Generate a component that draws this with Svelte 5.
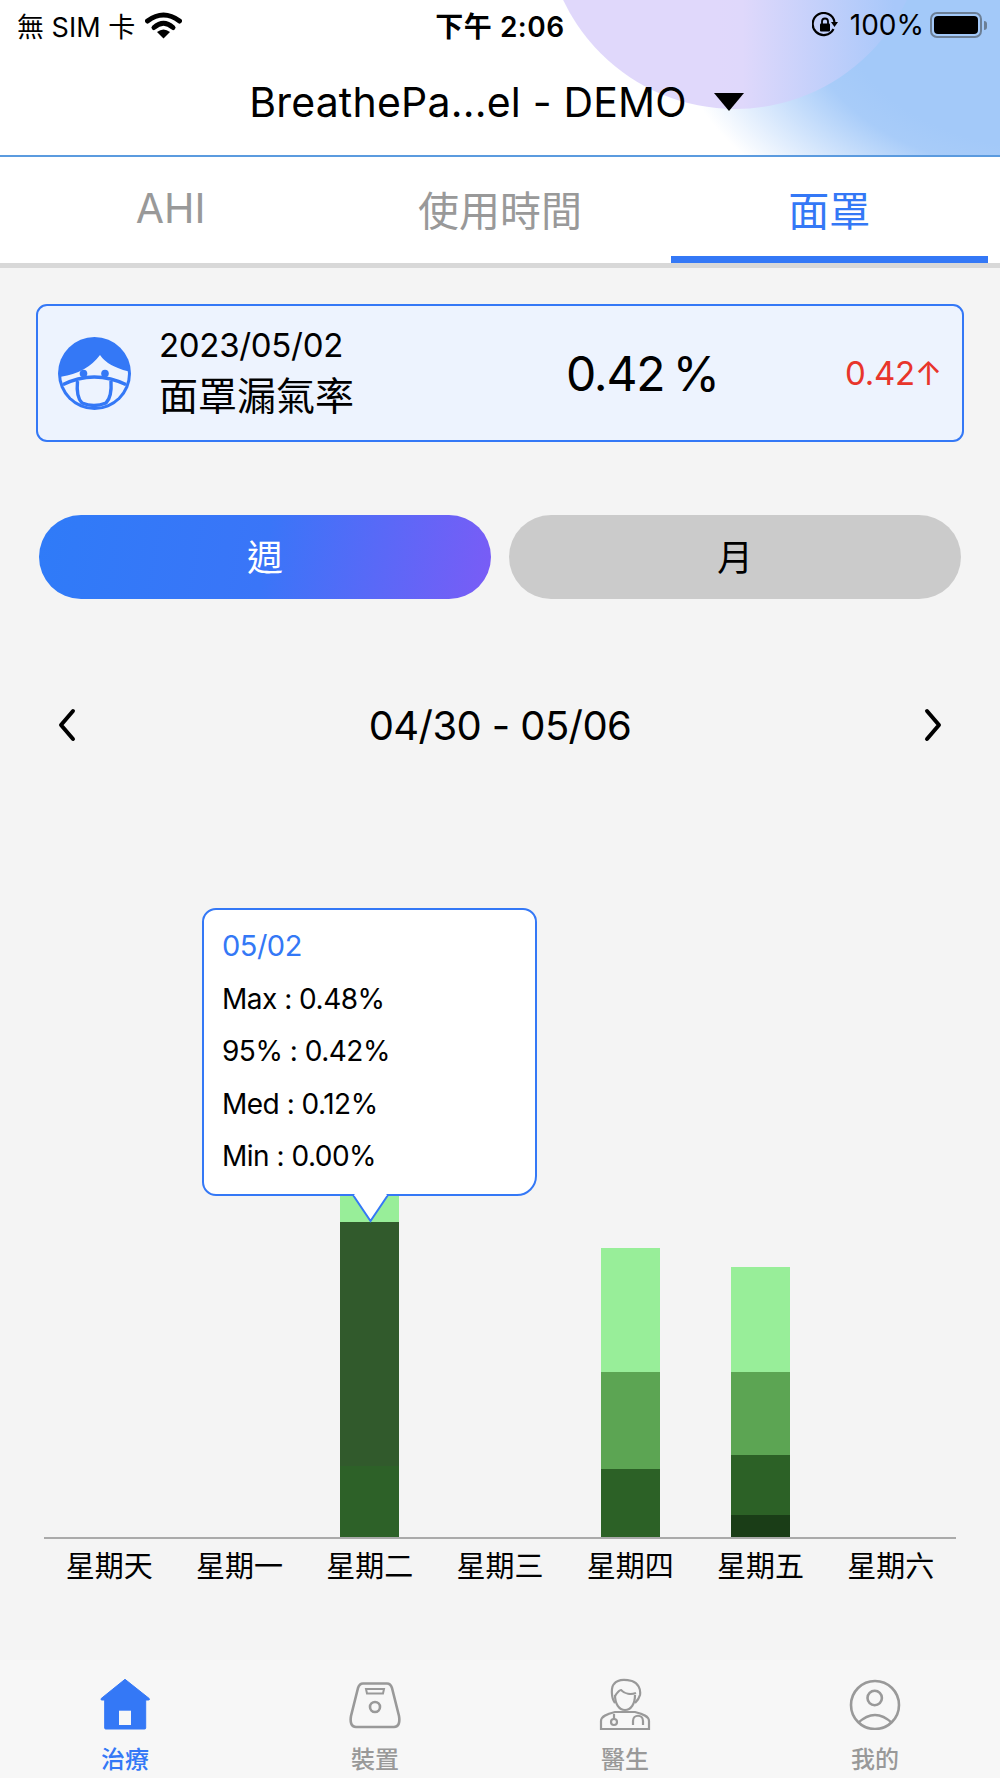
<script>
  const tabs = [
    { label: 'AHI' },
    { label: '使用時間' },
    { label: '面罩', active: true }
  ];

  // segment heights in px, listed from the top of the bar down
  const days = [
    { label: '星期天', segments: [] },
    { label: '星期一', segments: [] },
    {
      label: '星期二',
      segments: [
        { h: 30, color: '#98ee99' },
        { h: 244, color: '#315a2c' },
        { h: 71, color: '#2d6128' }
      ]
    },
    { label: '星期三', segments: [] },
    {
      label: '星期四',
      segments: [
        { h: 124, color: '#98ee99' },
        { h: 97, color: '#5ca553' },
        { h: 68, color: '#2c6126' }
      ]
    },
    {
      label: '星期五',
      segments: [
        { h: 105, color: '#98ee99' },
        { h: 83, color: '#5ca553' },
        { h: 60, color: '#2c6126' },
        { h: 22, color: '#1a3d17' }
      ]
    },
    { label: '星期六', segments: [] }
  ];

  const tooltipRows = ['Max : 0.48%', '95% : 0.42%', 'Med : 0.12%', 'Min : 0.00%'];
</script>

<div class="page">
  <header class="header">
    <span class="glow"></span>
    <span class="circle"></span>

    <div class="status">
      <div class="status-left">
        <span>無 SIM 卡</span>
        <svg class="wifi" viewBox="0 0 37 27" width="37" height="27">
          <path d="M2.5 9 Q18.5 -3 34.5 9" fill="none" stroke="#000" stroke-width="5" stroke-linecap="round" />
          <path d="M9 15.5 Q18.5 7 28 15.5" fill="none" stroke="#000" stroke-width="5" stroke-linecap="round" />
          <path d="M18.5 26.5 L12 20 Q18.5 15 25 20 Z" fill="#000" />
        </svg>
      </div>
      <div class="status-time">下午 2:06</div>
      <div class="status-right">
        <svg class="lock" viewBox="0 0 26 26" width="26" height="26">
          <path d="M21.5 17 A11 11 0 1 1 22.5 10" fill="none" stroke="#000" stroke-width="2.2" />
          <path d="M19 10 H26 L22.5 15 Z" fill="#000" />
          <rect x="8" y="11.5" width="10" height="8" rx="1" fill="#000" />
          <path d="M10 12 V9.5 A3 3 0 0 1 16 9.5 V12" fill="none" stroke="#000" stroke-width="1.8" />
        </svg>
        <span class="percent">100%</span>
        <span class="battery"><span class="battery-fill"></span></span>
        <span class="battery-nub"></span>
      </div>
    </div>

    <div class="title-row">
      <span class="title">BreathePa...el - DEMO</span>
      <svg viewBox="0 0 30 18" width="30" height="18"><path d="M0 0 H30 L15 18 Z" fill="#000" /></svg>
    </div>
  </header>

  <nav class="tabs">
    {#each tabs as tab}
      <div class="tab" class:active={tab.active}>{tab.label}</div>
    {/each}
  </nav>

  <main class="content">
    <section class="summary">
      <svg class="mask-icon" viewBox="0 0 73 73" width="73" height="73">
        <defs>
          <clipPath id="face-clip"><circle cx="36.5" cy="36.5" r="33.5" /></clipPath>
        </defs>
        <circle cx="36.5" cy="36.5" r="36.5" fill="#3478f6" />
        <path d="M0 40 Q28 37 42 18 Q50 30 73 35 V73 H0 Z" fill="#edf3fe" clip-path="url(#face-clip)" />
        <circle cx="25.5" cy="36.5" r="3.8" fill="#3478f6" />
        <circle cx="47" cy="36.5" r="3.8" fill="#3478f6" />
        <path d="M4 48 Q36 32 69 48" fill="none" stroke="#3478f6" stroke-width="3.4" clip-path="url(#face-clip)" />
        <path d="M19.5 44 Q18 60 24 66 Q36 71 48 66 Q54 60 53 44" fill="none" stroke="#3478f6" stroke-width="3.4" />
      </svg>
      <div class="summary-text">
        <div class="summary-date">2023/05/02</div>
        <div class="summary-name">面罩漏氣率</div>
      </div>
      <div class="summary-value">0.42 %</div>
      <div class="summary-delta">0.42↑</div>
    </section>

    <div class="segment">
      <div class="segment-btn on">週</div>
      <div class="segment-btn">月</div>
    </div>

    <div class="range">
      <svg viewBox="0 0 18 34" width="18" height="34"><path d="M15 3 L3 17 L15 31" fill="none" stroke="#000" stroke-width="4" stroke-linecap="round" stroke-linejoin="round" /></svg>
      <span>04/30 - 05/06</span>
      <svg viewBox="0 0 18 34" width="18" height="34"><path d="M3 3 L15 17 L3 31" fill="none" stroke="#000" stroke-width="4" stroke-linecap="round" stroke-linejoin="round" /></svg>
    </div>

    <div class="chart">
      <div class="plot">
        {#each days as day}
          <div class="col">
            {#if day.segments.length}
              <div class="bar">
                {#each day.segments as seg}
                  <div style="height: {seg.h}px; background: {seg.color}"></div>
                {/each}
              </div>
            {/if}
          </div>
        {/each}
      </div>
      <div class="labels">
        {#each days as day}
          <div>{day.label}</div>
        {/each}
      </div>

      <div class="tooltip">
        <div class="tooltip-date">05/02</div>
        {#each tooltipRows as row}
          <div>{row}</div>
        {/each}
        <svg class="tooltip-tip" viewBox="0 0 39 30" width="39" height="30">
          <path d="M2 1 L19.5 27 L37 1" fill="#fff" stroke="#3478f6" stroke-width="2" />
          <rect x="3.5" y="0" width="32" height="2" fill="#fff" />
        </svg>
      </div>
    </div>
  </main>

  <footer class="tabbar">
    <div class="tabbar-item on">
      <svg viewBox="0 0 52 52" width="52" height="52">
        <path d="M26 1.3 L50.2 20.5 Q51 22 49.5 22 H46.7 V50 Q46.7 51 45.7 51 H6.7 Q5.7 51 5.7 50 V22 H2.9 Q1.4 22 2.2 20.5 Z" fill="#3478f6" stroke="#3478f6" stroke-linejoin="round" />
        <rect x="20" y="32.7" width="12" height="14.3" fill="#f7f7f7" />
      </svg>
      <span>治療</span>
    </div>
    <div class="tabbar-item">
      <svg viewBox="0 0 52 52" width="52" height="52" fill="none" stroke="#999" stroke-width="2.6">
        <path d="M14 5.5 H38 C41 5.5 42 7 43 10 L50 38 C51 44 50 49 45 49 H7 C2 49 1 44 2 38 L9 10 C10 7 11 5.5 14 5.5 Z" />
        <path d="M17 11 H35 L34 15.5 H18 Z" stroke-width="2" />
        <circle cx="26" cy="29" r="5" />
      </svg>
      <span>裝置</span>
    </div>
    <div class="tabbar-item">
      <svg viewBox="0 0 52 52" width="52" height="52" fill="none" stroke="#999" stroke-width="2.2">
        <path d="M16 25 C12 20 12 9 15 6 C18 2 25 1 33 3 C39 5 42 11 41 17 C40 21 38 23 36 25" />
        <path d="M16 17 C16 26 20 32 26 32 C32 32 36 26 36 17" />
        <path d="M16 18 C18 15 20 12 22 12 C26 16 32 17 37 15" />
        <path d="M2 51 V43 C2 38 8 36 16 34 H36 C44 36 50 38 50 43 V51 Z" />
        <path d="M15 36 V41" />
        <circle cx="15" cy="44" r="3" />
        <path d="M34 47 V43 C34 36 44 36 44 43 V47" />
      </svg>
      <span>醫生</span>
    </div>
    <div class="tabbar-item">
      <svg viewBox="0 0 52 52" width="52" height="52" fill="none" stroke="#999" stroke-width="2.6">
        <circle cx="26" cy="27" r="24" />
        <circle cx="25.7" cy="20" r="7.2" />
        <path d="M9 45 Q26 29 43 45" />
      </svg>
      <span>我的</span>
    </div>
  </footer>
</div>

<style>
  :global(body) {
    background: #f4f4f4;
  }

  .page {
    width: 1000px;
    height: 1778px;
    overflow: hidden;
    display: flex;
    flex-direction: column;
    background: #f4f4f4;
    font-family: Inter, 'Noto Sans CJK TC', sans-serif;
    color: #000;
  }

  /* --- Header --- */
  .header {
    position: relative;
    height: 155px;
    overflow: hidden;
    background: #fff;
    border-bottom: 2px solid #5b9bdf;
    flex: none;
  }

  .glow {
    position: absolute;
    left: 700px;
    top: -160px;
    width: 520px;
    height: 400px;
    background: radial-gradient(ellipse at 70% 45%, #a3c9f9 42%, #a8ccf9 50%, #ffffff 76%);
  }

  .circle {
    position: absolute;
    left: 545px;
    top: -271px;
    width: 380px;
    height: 380px;
    border-radius: 50%;
    background: linear-gradient(90deg, #e0d8fb 45%, #dfd8fb 52%, #a8c8fa 92%);
  }

  .status {
    position: relative;
    display: grid;
    grid-template-columns: 1fr auto 1fr;
    align-items: center;
    height: 50px;
    padding: 0 13px 0 17px;
    font-size: 27px;
  }

  .status-left {
    display: flex;
    align-items: center;
    gap: 10px;
  }

  .status-time {
    margin-left: -4px;
    font-size: 28px;
    font-weight: 600;
    letter-spacing: 0.5px;
  }

  .status-right {
    display: flex;
    align-items: center;
    justify-content: flex-end;
  }

  .percent {
    margin-left: 12px;
    font-size: 28px;
  }

  .battery {
    display: block;
    box-sizing: border-box;
    width: 52px;
    height: 26px;
    margin-left: 6px;
    padding: 2px;
    border: 2px solid #6c7f96;
    border-radius: 7px;
  }

  .battery-fill {
    display: block;
    height: 100%;
    background: #000;
    border-radius: 4px;
  }

  .battery-nub {
    width: 3px;
    height: 9px;
    margin-left: 2px;
    background: #6c7f96;
    border-radius: 0 3px 3px 0;
  }

  .title-row {
    position: relative;
    display: flex;
    align-items: center;
    justify-content: center;
    gap: 27px;
    height: 56px;
    margin-top: 24px;
    padding-right: 7px;
  }

  .title {
    font-size: 41px;
    letter-spacing: 0.2px;
  }

  /* --- Tabs --- */
  .tabs {
    display: grid;
    grid-template-columns: repeat(3, 1fr);
    gap: 12px;
    height: 106px;
    padding: 0 12px;
    background: #fff;
    border-bottom: 5px solid #d8d8d8;
    flex: none;
  }

  .tab {
    display: flex;
    align-items: center;
    justify-content: center;
    padding-bottom: 4px;
    font-size: 41px;
    color: #999;
  }

  .tab.active {
    color: #3478f6;
    box-shadow: inset 0 -7px 0 #3478f6;
  }

  /* --- Content --- */
  .content {
    flex: 1;
    padding: 36px 36px 0;
    min-height: 0;
  }

  .summary {
    display: flex;
    align-items: center;
    box-sizing: border-box;
    height: 138px;
    padding: 0 20px 0 20px;
    background: #edf3fe;
    border: 2px solid #3478f6;
    border-radius: 11px;
  }

  .mask-icon {
    flex: none;
  }

  .summary-text {
    width: 407px;
    margin-left: 28px;
  }

  .summary-date {
    font-size: 33px;
    line-height: 46px;
    letter-spacing: -0.3px;
  }

  .summary-name {
    font-size: 39px;
    line-height: 56px;
  }

  .summary-value {
    font-size: 48px;
    letter-spacing: -1.2px;
    word-spacing: -4px;
  }

  .summary-delta {
    margin-left: auto;
    font-size: 33px;
    letter-spacing: -0.3px;
    color: #e8352b;
  }

  .segment {
    display: grid;
    grid-template-columns: 452px 452px;
    gap: 18px;
    margin: 73px 3px 0;
  }

  .segment-btn {
    box-sizing: border-box;
    height: 84px;
    padding-bottom: 4px;
    display: flex;
    align-items: center;
    justify-content: center;
    border-radius: 42px;
    background: #cbcbcb;
    font-size: 36px;
  }

  .segment-btn.on {
    background: linear-gradient(100deg, #2f7bf8 0%, #3a75f8 50%, #7a5cf6 100%);
    color: #fff;
  }

  .range {
    display: flex;
    align-items: center;
    justify-content: space-between;
    height: 60px;
    margin-top: 96px;
    padding: 0 22px;
    font-size: 40px;
    letter-spacing: -0.6px;
  }

  /* --- Chart --- */
  .chart {
    position: relative;
    margin: 0 -28px 0 8px;
    width: 912px;
    padding-top: 20px;
  }

  .plot {
    display: grid;
    grid-template-columns: repeat(7, 1fr);
    align-items: end;
    height: 762px;
    border-bottom: 2px solid #aaa;
  }

  .col {
    display: flex;
    justify-content: center;
  }

  .bar {
    width: 59px;
  }

  .labels {
    display: grid;
    grid-template-columns: repeat(7, 1fr);
    margin-top: 9px;
    font-size: 29px;
    line-height: 38px;
    text-align: center;
  }

  .tooltip {
    position: absolute;
    left: 158px;
    top: 153px;
    box-sizing: border-box;
    width: 335px;
    height: 288px;
    padding: 10px 18px 0;
    background: #fff;
    border: 2px solid #3478f6;
    border-radius: 14px 14px 20px 14px;
    font-size: 28px;
    line-height: 52.6px;
    letter-spacing: -0.5px;
  }

  .tooltip-date {
    font-size: 29px;
    color: #3478f6;
  }

  .tooltip-tip {
    position: absolute;
    left: 147px;
    top: 284px;
  }

  /* --- Tab bar --- */
  .tabbar {
    display: grid;
    grid-template-columns: repeat(4, 1fr);
    height: 118px;
    background: #f7f7f7;
    flex: none;
  }

  .tabbar-item {
    display: flex;
    flex-direction: column;
    align-items: center;
    padding-top: 18px;
    font-size: 24px;
    font-weight: 500;
    color: #999;
  }

  .tabbar-item span {
    margin-top: 13px;
    line-height: 34px;
  }

  .tabbar-item.on {
    color: #3478f6;
  }
</style>
